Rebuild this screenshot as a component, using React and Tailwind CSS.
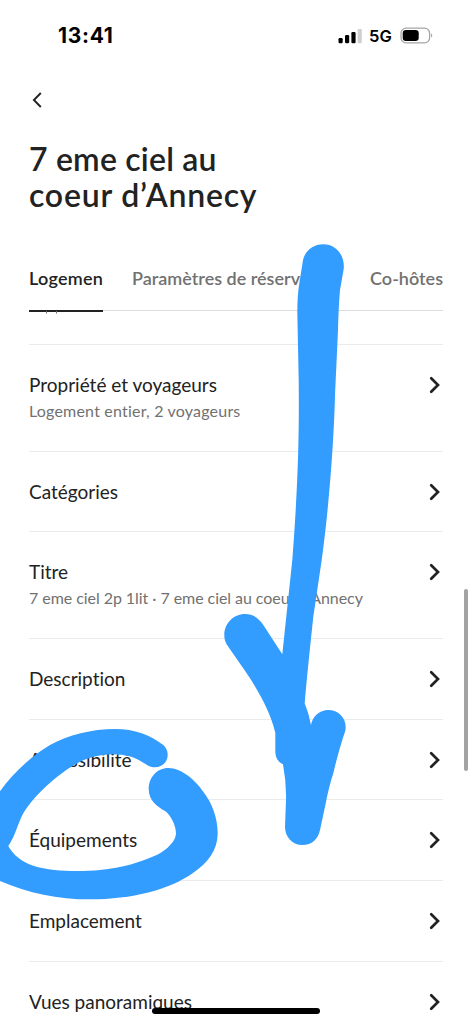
import React from 'react';

const rows = [
  { title: 'Propriété et voyageurs', detail: 'Logement entier, 2 voyageurs', height: 'h-[107px]', tracking: 'tracking-[0.2px]' },
  { title: 'Catégories', height: 'h-[80px]' },
  { title: 'Titre', detail: '7 eme ciel 2p 1lit · 7 eme ciel au coeur d’Annecy', height: 'h-[107px]', tracking: 'tracking-[-0.06px]' },
  { title: 'Description', height: 'h-[81px]' },
  { title: 'Accessibilité', height: 'h-[80px]' },
  { title: 'Équipements', height: 'h-[81px]' },
  { title: 'Emplacement', height: 'h-[81px]' },
  { title: 'Vues panoramiques', height: 'h-[81px]' },
];

const StatusBar = () => (
  <div className="flex h-[72px] shrink-0 items-start justify-between pl-[58px] pr-[38px] pt-[22px] text-black">
    <span className="font-['Inter'] text-[21px] font-bold leading-[28px] tracking-[0.7px]">13:41</span>
    <div className="flex items-center pt-[3px]">
      <svg width="24" height="16" viewBox="0 0 24 16">
        <rect x="0.5" y="10" width="4.2" height="5.2" rx="1.2" />
        <rect x="7" y="7" width="4.2" height="8.2" rx="1.2" />
        <rect x="13.4" y="4" width="4.2" height="11.2" rx="1.2" />
        <rect x="19.6" y="1" width="4.2" height="14.2" rx="1.2" fill="#d0d0d0" />
      </svg>
      <span className="ml-[7px] w-[24px] font-['Inter'] text-[16.5px] font-semibold leading-[22px]">5G</span>
      <svg className="ml-[7px]" width="34" height="18" viewBox="0 0 34 18" fill="none">
        <rect x="1" y="1.2" width="28.6" height="14.6" rx="5" stroke="#a5a5a5" strokeWidth="1.3" />
        <rect x="2.7" y="3" width="16" height="11" rx="3.3" fill="#000" />
        <path d="M31.2 6.5v4c1.4-.7 1.4-3.3 0-4Z" fill="#999" />
      </svg>
    </div>
  </div>
);

const Header = () => (
  <header className="shrink-0 px-[29px]">
    <svg className="mt-[18px] ml-[3px]" width="12" height="20" viewBox="0 0 12 20" fill="none">
      <path d="M8.8 3 1.9 10l6.9 7" stroke="#222" strokeWidth="1.9" />
    </svg>
    <h1 className="mt-[31px] text-[32px] font-semibold leading-[36px] text-[#222]">
      <span className="block tracking-[0.2px]">7 eme ciel au</span>
      <span className="block tracking-[0.8px]">coeur d’Annecy</span>
    </h1>
    <nav className="mt-[52px] flex h-[46px] justify-between whitespace-nowrap border-b border-[#ddd] text-[18px] font-semibold leading-[26px] text-[#717171]">
      <button className="flex h-[47px] w-[74px] items-start border-b-[2.5px] border-[#222] tracking-[0.25px] text-[#222]">Logemen</button>
      <button className="ml-[29px] flex items-start">Paramètres de réserv</button>
      <button className="ml-auto flex items-start">Co-hôtes</button>
    </nav>
  </header>
);

const Row = ({ title, detail, height, tracking }) => (
  <li className={`flex shrink-0 justify-between border-b border-[#ebebeb] pt-[27px] ${height}`}>
    <div className="whitespace-nowrap">
      <p className="text-[19px] leading-[26px] text-[#222]">{title}</p>
      {detail && <p className={`text-[16px] leading-[25px] text-[#717171] ${tracking}`}>{detail}</p>}
    </div>
    <svg className="mr-[2px] mt-[3px]" width="12" height="20" viewBox="0 0 12 20" fill="none">
      <path d="m2.2 3.2 6.8 6.8-6.8 6.8" stroke="#222" strokeWidth="2.7" strokeLinecap="round" />
    </svg>
  </li>
);

// Hand-drawn marker strokes: an arrow pointing down and a loop around a row
const Marker = () => (
  <svg className="pointer-events-none absolute inset-0" width="472" height="1024" viewBox="0 0 472 1024" fill="#339cff">
    <path d="M323.3 244.3C312 244.3 304 252 302.7 262L299.3 283.3Q297.3 296 297.3 312L298.7 380C299.3 437 298 485 292.3 560L282.3 654.3L263.3 625C259 618 252.5 614 245 614C233.5 614 224.3 623.5 224.3 635C224.3 640 225.5 643 228.3 646.7L246.7 673.3C259 692 270 711 275.3 732.7V751.7Q275.5 761 283 764.3Q286.5 783 286 800L285 826.7C285 837 292.5 845 302.3 845C312 845 318 839 320 830L325 806.7Q329 786 333.3 773.3Q338 753 343.3 736.7C345 732.5 345.7 730 345.7 727C345.7 717.5 338 710 328.3 710C319.5 710 312.5 716.5 311 725Q309 714 304.7 703.3Q306 685 313.3 616.7L321.7 560C329 507 334 440 335 395L338 330Q338.5 307 340 290L343.7 269C345 255 336 244.3 323.3 244.3Z" />
    <path d="M-2 794C12 774 30 757 50 745C68 735 92 729 115 729C135 729 150 735 163.3 745C166.5 748 167.7 751 167.7 755C167.7 762 162 767.3 155 767.3C149 767.3 146 764 143.3 762.7C135 757 125 754.3 113.3 754.3C94 754.3 78 761 63.3 772.3C48 783 32 799 23.3 813.3C17 825 16 835 8.3 846C13 855 22 862 33.3 865.7C53 872 82 871.5 100 870C122 868 141 862 156.7 855C167 850 176 841 176 833.3C176 826 171 815 165 811C158 807 148.7 801 148.7 789C148.7 777.5 157 768 168.3 768C182 768 196 781 203.3 791.7C212 803 217.7 818 217.7 833.3C217.7 850 208 863 193.3 872.7C169 890 132 899.3 90 899.3C57 899.3 27 893-2 880Z" />
  </svg>
);

const App = () => (
  <div className="relative flex h-[1024px] w-[472px] flex-col overflow-hidden bg-white font-['Lato','Open_Sans',sans-serif] [font-variant-ligatures:none]">
    <StatusBar />
    <Header />
    <main className="shrink-0 px-[29px]">
      {/* Bottom of the row scrolled under the tabs */}
      <div className="h-[34px] border-b border-[#ebebeb]">
        <svg width="74" height="3" viewBox="0 0 74 3">
          <path d="M17.5 0v2.5M27.5 0v2.5" stroke="#717171" />
        </svg>
      </div>
      <ul className="flex flex-col">
        {rows.map((row) => (
          <Row key={row.title} {...row} />
        ))}
      </ul>
    </main>
    <Marker />
    <div className="absolute left-[464px] top-[589px] h-[182px] w-[4px] rounded-full bg-[#a3a3a3]" />
    <div className="absolute left-[152px] top-[1008px] h-[6px] w-[168px] rounded-full bg-black" />
  </div>
);

export default App;
